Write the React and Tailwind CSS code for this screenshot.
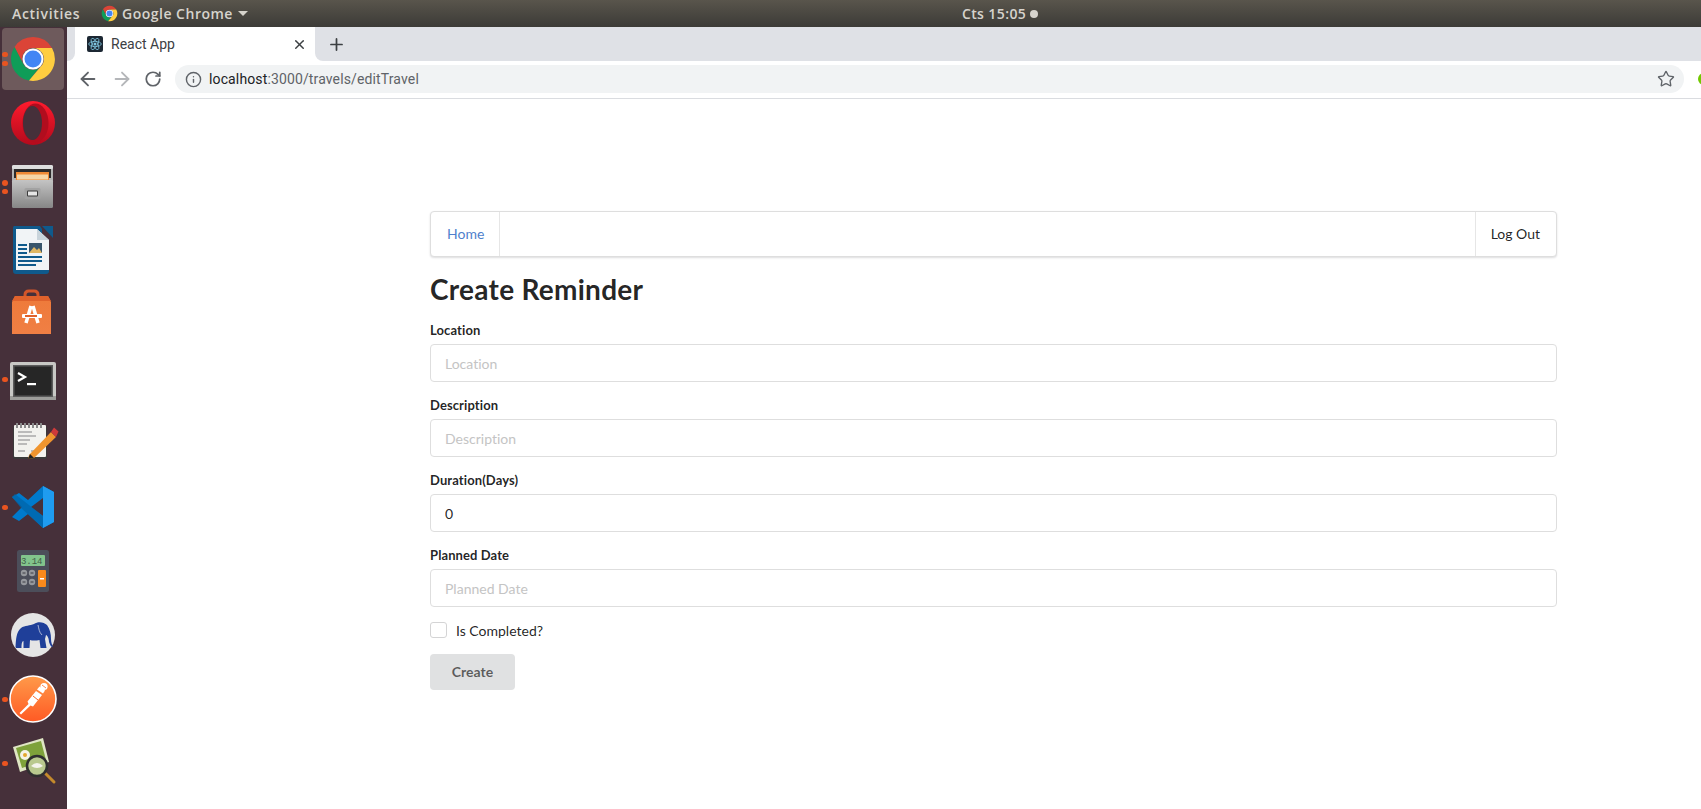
import React from "react";
import { ArrowLeft, ArrowRight, RotateCw, Info, Star, Plus, X } from "lucide-react";

const DOCK = "#46303a";

function ChromeLogo({ size = 48 }) {
  return (
    <svg width={size} height={size} viewBox="0 0 48 48">
      <path d="M24 2A22 22 0 0 1 43 13H24A11 11 0 0 0 14.5 29.5L5.5 12A22 22 0 0 1 24 2Z" fill="#db4437" />
      <path d="M5.5 12A22 22 0 0 0 20 45.6L29.5 33.5A11 11 0 0 1 14.5 29.5Z" fill="#0f9d58" />
      <path d="M43 13A22 22 0 0 1 20 45.6L33.5 29.5A11 11 0 0 0 24 13Z" fill="#ffcd40" />
      <circle cx="24" cy="24" r="10.5" fill="#fff" />
      <circle cx="24" cy="24" r="8.5" fill="#4285f4" />
    </svg>
  );
}

function Box({ children, defs, vx = 0, vy = 0 }) {
  return (
    <svg width="60" height="60" viewBox={`${vx} ${vy} 60 60`}>
      {defs && <defs>{defs}</defs>}
      {children}
    </svg>
  );
}

const Opera = () => (
  <Box
    defs={
      <linearGradient id="op" x1="0" y1="0" x2="0" y2="1">
        <stop offset="0" stopColor="#ff1b2d" />
        <stop offset="1" stopColor="#b30a1c" />
      </linearGradient>
    }
  >
    <circle cx="30" cy="30" r="22" fill="url(#op)" />
    <ellipse cx="32.5" cy="30" rx="13" ry="19.5" fill="#b10d1e" />
    <ellipse cx="29.5" cy="30" rx="9.5" ry="17" fill={DOCK} />
  </Box>
);

const Files = () => (
  <Box
    vx={3}
    defs={
      <linearGradient id="fi" x1="0" y1="0" x2="0" y2="1">
        <stop offset="0" stopColor="#c4c4c4" />
        <stop offset="1" stopColor="#868686" />
      </linearGradient>
    }
  >
    <rect x="12" y="8" width="41" height="42" rx="2" fill="#b5b5b5" />
    <rect x="12" y="8" width="41" height="4" rx="1.5" fill="#dedede" />
    <rect x="14" y="12" width="37" height="9" fill="#2d2b2b" />
    <rect x="16" y="15" width="33" height="8" fill="#f08a35" />
    <rect x="17" y="17.5" width="31" height="5" fill="#f7d6a6" />
    <rect x="12" y="23" width="41" height="28" rx="1.5" fill="url(#fi)" />
    <rect x="24.5" y="31" width="16" height="11" rx="1.5" fill="#a2a2a2" />
    <rect x="27" y="33.5" width="11" height="6" rx="1" fill="#3b3b3b" />
    <rect x="28" y="34.5" width="9" height="4" fill="#e6e6e6" />
  </Box>
);

const Writer = () => (
  <Box vx={3}>
    <path d="M14 5H40L42 8V50A3 3 0 0 1 39 53H16A3 3 0 0 1 13 50V7A2 2 0 0 1 14 5Z" fill="#0f5a8c" />
    <path d="M42 5H53V17Z" fill="#0f5a8c" />
    <path d="M49 19V50A3 3 0 0 1 46 53H39V19Z" fill="#0f5a8c" />
    <path d="M16 8H37L49 19V49H16Z" fill="#f1f4f6" />
    <path d="M37 8V19H49" fill="#c9d4db" />
    <rect x="18" y="23" width="9" height="2" fill="#0f5a8c" />
    <rect x="18" y="27" width="9" height="2" fill="#0f5a8c" />
    <rect x="18" y="31" width="9" height="2" fill="#0f5a8c" />
    <rect x="29" y="22" width="13" height="10" fill="#39566c" />
    <path d="M29 32L34 26L37 29L39 27L42 32Z" fill="#e0b763" />
    <rect x="18" y="35" width="24" height="2" fill="#0f5a8c" />
    <rect x="18" y="39" width="24" height="2" fill="#0f5a8c" />
    <rect x="18" y="43" width="18" height="2" fill="#0f5a8c" />
  </Box>
);

const Software = () => (
  <Box
    vx={3}
    vy={1}
    defs={
      <linearGradient id="sw" x1="0" y1="0" x2="0" y2="1">
        <stop offset="0" stopColor="#ee7a3a" />
        <stop offset="1" stopColor="#f07f44" />
      </linearGradient>
    }
  >
    <path d="M25 17V11Q25 7 29 7H34Q38 7 38 11V17" fill="none" stroke="#d4562a" strokeWidth="3" />
    <path d="M15 12H48L51 18V50H12V18Z" fill="url(#sw)" />
    <path d="M12 17L15 12H48L51 17Z" fill="#e0622c" />
    <path d="M26 39L31 22M38 39L33 22" stroke="#fff" strokeWidth="3.5" fill="none" />
    <rect x="22" y="30" width="20" height="4" rx="1" fill="#fff" />
    <rect x="25" y="31" width="12" height="2" fill="#e0622c" />
  </Box>
);

const Terminal = () => (
  <Box vy={-2}>
    <rect x="7" y="11" width="46" height="38" rx="2" fill="#c8c8c5" />
    <rect x="7" y="45" width="46" height="4" fill="#9d9d9a" />
    <rect x="10" y="14" width="40" height="32" fill="#5a5a5a" />
    <rect x="11.5" y="15.5" width="37" height="29" fill="#262626" />
    <path d="M15 22L22 26L15 30" fill="none" stroke="#fff" strokeWidth="2.2" />
    <rect x="24" y="32" width="9" height="2.2" fill="#fff" />
  </Box>
);

const Notepad = () => (
  <Box vy={1}>
    <rect x="10" y="14" width="34" height="33" rx="2" fill="#3a3a3a" />
    <rect x="11" y="13" width="32" height="32" rx="1" fill="#f2f2ee" />
    <path d="M14 11V16M18 11V16M22 11V16M26 11V16M30 11V16M34 11V16M38 11V16" stroke="#8b8b8b" strokeWidth="2" />
    <path d="M15 20H29M15 24H33M15 28H27M15 32H24M15 39H22M28 39H37" stroke="#a9a9a9" strokeWidth="1.3" />
    <path d="M26 43L48 20L53 25L31 46L25 47Z" fill="#f0952e" />
    <path d="M48 20L51 15.5L55.5 19.5L53 25Z" fill="#cf3a3a" />
    <path d="M25 47L27 42L31 46Z" fill="#222" />
  </Box>
);

const VSCode = () => (
  <Box vx={3}>
    <path d="M43 9L54 15V45L43 51L28 37L19 44L12 40L22 30L12 20L19 16L28 23Z" fill="#007acc" />
    <path d="M43 9L54 15V45L43 51Z" fill="#1f9cf0" />
    <path d="M43 21V39L31 30Z" fill={DOCK} />
    <path d="M12 20L15 17L43 39V51L21 31Z" fill="#0065a9" opacity="0.75" />
  </Box>
);

const Calculator = () => (
  <Box>
    <rect x="14" y="9" width="32" height="42" rx="2.5" fill="#4c4e5a" />
    <rect x="18" y="14" width="24" height="11" rx="1" fill="#82c48c" />
    <text x="39.5" y="23" textAnchor="end" fontSize="9" fontFamily="'Liberation Mono', monospace" fill="#3f5f47">3.14</text>
    <circle cx="21" cy="32" r="3.2" fill="#96989d" />
    <circle cx="29" cy="32" r="3.2" fill="#96989d" />
    <circle cx="21" cy="41" r="3.2" fill="#96989d" />
    <circle cx="29" cy="41" r="3.2" fill="#96989d" />
    <path d="M19.5 32H22.5M27.5 32H30.5M19.5 41H22.5M27.5 41H30.5" stroke="#3c3d44" strokeWidth="1" />
    <rect x="35" y="29" width="8" height="17" rx="1" fill="#f98a1c" />
    <rect x="37" y="37" width="4" height="1.5" fill="#fff" />
  </Box>
);

const Elephant = () => (
  <Box>
    <circle cx="30" cy="30" r="22" fill="#e5e5e5" />
    <path
      d="M12.5 42C13 35 13 27 18 23C22 20 27 21 31 19C35 16 41 17 44 20C47 24 48 29 48 34C48 37 49 40 50 42C48 42 47 40 46 37C46 33 44 30 43 30L42 34L43.5 43H37.5L36.5 35C33.5 35.5 30 36 27 35L26.5 43H20.5L20.5 36C19 36 18.5 39 18.5 43H13Z"
      fill="#1f3f99"
    />
    <path d="M35 20C36 24 36 27 39 30" fill="none" stroke="#dfe3ee" strokeWidth="0.7" />
  </Box>
);

const Postman = () => (
  <Box
    defs={
      <linearGradient id="pm" x1="0" y1="0" x2="0" y2="1">
        <stop offset="0" stopColor="#ff9a4a" />
        <stop offset="1" stopColor="#ff5a24" />
      </linearGradient>
    }
  >
    <circle cx="30" cy="30" r="23" fill="url(#pm)" stroke="#fff" strokeWidth="1.6" />
    <path d="M16.5 44L25.5 35L24.5 32.5L33 22L39 26L30 37.5L27.5 36.5L18 45.5Z" fill="#fff" />
    <path d="M34 20.5L36.5 17.5L42 21.5L40 24.5Z" fill="#fff" />
    <circle cx="41" cy="17.5" r="3.6" fill="#fff" />
    <path d="M30 27L35 31" stroke="#f9692c" strokeWidth="1" />
    <path d="M39 16L43 19" stroke="#f9692c" strokeWidth="0.8" />
  </Box>
);

const Viewer = () => (
  <Box vx={1}>
    <path d="M11 14L41 5L47 29L18 39Z" fill="#dfe6c4" />
    <path d="M14 15L39 8L44 27L20 35Z" fill="#7ea23a" />
    <circle cx="23" cy="22" r="5" fill="#f5f3e5" />
    <circle cx="23" cy="22" r="2" fill="#e3a72f" />
    <path d="M41 38L52 49" stroke="#c48a2c" strokeWidth="3" strokeLinecap="round" />
    <circle cx="35" cy="33" r="10" fill="#b9c98e" stroke="#2f2f2f" strokeWidth="2.6" />
    <path d="M29 33Q35 27 41 33Q35 37 29 33Z" fill="#f4f4ec" />
  </Box>
);

function DockItem({ dots = [], active, children }) {
  return (
    <div className="relative flex h-[64px] items-center pl-[3px]">
      {active && <div className="absolute left-[2px] top-[1px] h-[62px] w-[62px] rounded-[4px] bg-[#6e5a5c]" />}
      <div className="relative flex h-[60px] w-[60px] items-center justify-center">{children}</div>
      {dots.map((top) => (
        <span key={top} className="absolute left-[2.25px] h-[5.5px] w-[5.5px] rounded-full bg-[#e95420]" style={{ top }} />
      ))}
    </div>
  );
}

function Field({ label, placeholder, value }) {
  return (
    <div className="mb-[15px]">
      <label className="mb-[5px] block text-[13px] font-bold leading-[17px] tracking-[0.1px] text-[rgba(0,0,0,0.87)]">{label}</label>
      <input
        readOnly
        placeholder={placeholder}
        defaultValue={value}
        className="block h-[38px] w-full rounded-[4px] border border-[#dedede] bg-white px-[14px] text-[14px] text-[rgba(0,0,0,0.87)] outline-none [font-variant-ligatures:none] placeholder:text-[#c4c4c4]"
      />
    </div>
  );
}

export default function App() {
  return (
    <div className="flex h-[809px] w-[1701px] flex-col overflow-hidden bg-white font-['Lato',sans-serif] [font-variant-ligatures:none]">
      <header className="flex h-[27px] shrink-0 items-center bg-gradient-to-b from-[#59554c] to-[#3c3b37] pl-[12px] font-['Open_Sans',sans-serif] text-[14px] font-semibold text-[#d6d3cc]">
        <span className="w-[89px] tracking-[0.7px]">Activities</span>
        <ChromeLogo size={17} />
        <span className="ml-[4px] tracking-[0.5px]">Google Chrome</span>
        <span className="ml-[5px] h-0 w-0 border-x-[5px] border-t-[5px] border-x-transparent border-t-[#d6d3cc]" />
        <span className="ml-[714px] tracking-[0.4px]">Cts 15:05</span>
        <span className="ml-[4px] h-[8px] w-[8px] rounded-full bg-[#d6d3cc]" />
      </header>

      <div className="flex min-h-0 flex-1">
        <aside className="w-[67px] shrink-0 bg-[#46303a]">
          <DockItem active dots={[24.5, 33.5]}>
            <ChromeLogo />
          </DockItem>
          <DockItem><Opera /></DockItem>
          <DockItem dots={[25, 33.5]}><Files /></DockItem>
          <DockItem><Writer /></DockItem>
          <DockItem><Software /></DockItem>
          <DockItem dots={[29.5]}><Terminal /></DockItem>
          <DockItem><Notepad /></DockItem>
          <DockItem dots={[29.5]}><VSCode /></DockItem>
          <DockItem><Calculator /></DockItem>
          <DockItem><Elephant /></DockItem>
          <DockItem dots={[29.5]}><Postman /></DockItem>
          <DockItem dots={[29.5]}><Viewer /></DockItem>
        </aside>

        <main className="min-w-0 flex-1">
          <div className="flex h-[34px] bg-white font-['Roboto',sans-serif]">
            <div className="w-[8px] shrink-0 rounded-br-[8px] bg-[#dfe1e6]" />
            <div className="flex w-[240px] shrink-0 items-center rounded-t-[8px] bg-white pl-[12px] pr-[8.5px]">
              <svg width="16" height="16" viewBox="0 0 16 16" className="shrink-0">
                <rect width="16" height="16" rx="2" fill="#1c2733" />
                <circle cx="8" cy="8" r="1.5" fill="#7fc5e0" />
                <g fill="none" stroke="#7fc5e0" strokeWidth="0.8">
                  <ellipse cx="8" cy="8" rx="6.3" ry="2.6" />
                  <ellipse cx="8" cy="8" rx="6.3" ry="2.6" transform="rotate(60 8 8)" />
                  <ellipse cx="8" cy="8" rx="6.3" ry="2.6" transform="rotate(120 8 8)" />
                </g>
              </svg>
              <span className="ml-[8px] flex-1 text-[14px] text-[#3c4043]">React App</span>
              <X size={15} strokeWidth={2.4} className="text-[#3c4043]" />
            </div>
            <div className="flex flex-1 items-center rounded-bl-[8px] bg-[#dfe1e6] pl-[12px]">
              <Plus size={19} strokeWidth={2.2} className="text-[#3c4043]" />
            </div>
          </div>

          <div className="flex h-[38px] items-center border-b border-[#dadce0] bg-white pb-[1px] pl-[10px] font-['Roboto',sans-serif]">
            <ArrowLeft size={22} strokeWidth={2} className="shrink-0 text-[#5f6368]" />
            <ArrowRight size={22} strokeWidth={2} className="ml-[12px] shrink-0 text-[#b4b6b9]" />
            <RotateCw size={18} strokeWidth={2.3} className="ml-[11px] shrink-0 text-[#5f6368]" />
            <div className="ml-[13px] flex h-[28px] w-[1509px] shrink-0 items-center rounded-full bg-[#f1f3f4] pl-[9.5px] pr-[9px]">
              <Info size={17} strokeWidth={2} className="shrink-0 text-[#5f6368]" />
              <span className="ml-[7.5px] flex-1 text-[14px] tracking-[0.13px] text-[#5f6368]">
                <span className="text-[#202124]">localhost</span>:3000/travels/editTravel
              </span>
              <Star size={18} strokeWidth={1.8} className="shrink-0 text-[#5f6368]" />
            </div>
            <span className="ml-[14px] h-[12px] w-[12px] shrink-0 rounded-full bg-[#72c800]" />
          </div>

          <div className="ml-[363px] w-[1127px] pt-[112px]">
            <nav className="flex h-[46px] items-stretch rounded-[4px] border border-[#dedede] bg-white text-[14px] shadow-[0_1px_2px_0_rgba(34,36,38,0.15)]">
              <a className="flex items-center border-r border-[#e6e6e6] pb-[2px] pl-[16px] pr-[15px] text-[#4f7fcc]">Home</a>
              <a className="ml-auto flex items-center border-l border-[#e6e6e6] pb-[2px] pl-[15px] pr-[16px] text-[rgba(0,0,0,0.87)]">Log Out</a>
            </nav>
            <h1 className="mb-[15px] mt-[14px] text-[28px] font-bold leading-[36px] tracking-[0.27px] text-[rgba(0,0,0,0.87)]">Create Reminder</h1>
            <form>
              <Field label="Location" placeholder="Location" />
              <Field label="Description" placeholder="Description" />
              <Field label="Duration(Days)" value="0" />
              <Field label="Planned Date" placeholder="Planned Date" />
              <div className="mt-[15px] flex h-[16px] items-center">
                <span className="h-[16px] w-[17px] rounded-[3px] border border-[#d4d4d5] bg-white" />
                <span className="ml-[9px] text-[14px] text-[rgba(0,0,0,0.87)]">Is Completed?</span>
              </div>
              <button
                type="button"
                className="mt-[16px] h-[36px] w-[85px] rounded-[4px] bg-[#e0e1e2] pb-[2px] text-[14px] font-bold text-[rgba(0,0,0,0.6)]"
              >
                Create
              </button>
            </form>
          </div>
        </main>
      </div>
    </div>
  );
}
